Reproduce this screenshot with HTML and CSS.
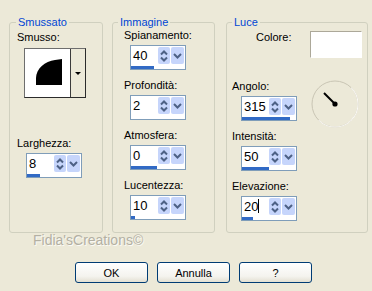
FILE: index.html
```html
<!DOCTYPE html>
<html lang="it">
<head>
<meta charset="utf-8">
<title>Smussatura interna</title>
<link rel="stylesheet" href="styles.css">
</head>
<body>
<div class="dialog">
  <div class="groups">
    <fieldset class="group g1">
      <legend>Smussato</legend>
      <div class="label l-smusso">Smusso:</div>
      <div class="preview">
        <div class="preview-img">
          <svg width="44" height="48" viewBox="0 0 44 48"><path d="M11 36 L11 29 C11 20 20 12 30 11 L37 10 L37 36 Z" fill="#000"/></svg>
        </div>
        <div class="preview-btn"><span class="tri"></span></div>
      </div>
      <div class="label l-larg">Larghezza:</div>
      <div class="spin s1">
        <div class="spin-top"><span class="val">8</span><span class="updown"></span><span class="drop"></span></div>
        <div class="bar"><i style="width:13px"></i></div>
      </div>
    </fieldset>

    <fieldset class="group g2">
      <legend>Immagine</legend>
      <div class="label">Spianamento:</div>
      <div class="spin s2">
        <div class="spin-top"><span class="val">40</span><span class="updown"></span><span class="drop"></span></div>
        <div class="bar"><i style="width:23px"></i></div>
      </div>
      <div class="label">Profondità:</div>
      <div class="spin s2">
        <div class="spin-top"><span class="val">2</span><span class="updown"></span><span class="drop"></span></div>
        <div class="bar"><i style="width:0px"></i></div>
      </div>
      <div class="label">Atmosfera:</div>
      <div class="spin s2">
        <div class="spin-top"><span class="val">0</span><span class="updown"></span><span class="drop"></span></div>
        <div class="bar"><i style="width:26px"></i></div>
      </div>
      <div class="label">Lucentezza:</div>
      <div class="spin s2">
        <div class="spin-top"><span class="val">10</span><span class="updown"></span><span class="drop"></span></div>
        <div class="bar"><i style="width:4px"></i></div>
      </div>
    </fieldset>

    <fieldset class="group g3">
      <legend>Luce</legend>
      <div class="color-row">
        <div class="label l-colore">Colore:</div>
        <div class="swatch"></div>
      </div>
      <div class="angle-row">
        <div class="angle-col">
          <div class="label">Angolo:</div>
          <div class="spin s3">
            <div class="spin-top"><span class="val">315</span><span class="updown"></span><span class="drop"></span></div>
            <div class="bar"><i style="width:48px"></i></div>
          </div>
        </div>
        <svg class="dial" width="48" height="48" viewBox="0 0 48 48">
          <circle cx="24" cy="24" r="23" fill="none" stroke="#c9c5b4" stroke-width="1"/>
          <path d="M24 1 A23 23 0 0 1 24 47" fill="none" stroke="#fbfaf6" stroke-width="1" transform="rotate(45 24 24)"/>
          <line x1="13" y1="13" x2="24" y2="24" stroke="#000" stroke-width="2"/>
          <circle cx="24" cy="24" r="2.6" fill="#000"/>
        </svg>
      </div>
      <div class="label l-int">Intensità:</div>
      <div class="spin s3">
        <div class="spin-top"><span class="val">50</span><span class="updown"></span><span class="drop"></span></div>
        <div class="bar"><i style="width:27px"></i></div>
      </div>
      <div class="label">Elevazione:</div>
      <div class="spin s3">
        <div class="spin-top"><span class="val">20<span class="caret"></span></span><span class="updown"></span><span class="drop"></span></div>
        <div class="bar"><i style="width:11px"></i></div>
      </div>
    </fieldset>
  </div>

  <div class="watermark">Fidia'sCreations©</div>

  <div class="buttons">
    <button class="btn">OK</button>
    <button class="btn">Annulla</button>
    <button class="btn">?</button>
  </div>
</div>
</body>
</html>
```

FILE: styles.css
```css
* { box-sizing: border-box; }
html, body {
  margin: 0;
  padding: 0;
  background: #ece9d8;
}
body {
  width: 372px;
  height: 291px;
  overflow: hidden;
  font-family: "Liberation Sans", Arial, sans-serif;
  font-size: 11px;
  color: #000;
}
.dialog {
  padding: 16px 0 0 9px;
}
.groups {
  display: flex;
  align-items: flex-start;
}
.group {
  margin: 0;
  padding: 0;
  border: 1px solid #d0d0bf;
  border-radius: 3px;
  height: 217px;
  min-width: 0;
}
.g1 { width: 94px; padding-left: 7px; }
.g2 { width: 103px; margin-left: 9px; padding-left: 11px; }
.g3 { width: 142px; margin-left: 11px; padding-left: 5px; padding-right: 5px; }
legend {
  color: #0046d5;
  font-size: 11px;
  line-height: 13px;
  padding: 0 2px;
}
.g1 legend { margin-left: -1px; }
.g2 legend { margin-left: -6px; }
.g3 legend { margin-left: 0; }

.label {
  line-height: 13px;
  height: 13px;
  margin-bottom: 3px;
  white-space: nowrap;
}
.spin + .label { margin-top: 9px; }

/* group 1 */
.l-smusso { margin-top: 2px; margin-bottom: 4px; }
.preview {
  display: flex;
  width: 62px;
  height: 50px;
  margin-left: 7px;
  border: 1px solid #2b2b2b;
  border-top-color: #6e6e6e;
  border-left-color: #6e6e6e;
  background: #fff;
}
.preview-img {
  width: 44px;
  height: 48px;
  background: #fff;
}
.preview-img svg { display: block; }
.preview-btn {
  flex: 1;
  display: flex;
  align-items: center;
  justify-content: center;
  background: #ece9d8;
  border-left: 1px solid #fff;
  box-shadow: inset 1px 0 0 #3c3c3c;
}
.tri {
  width: 0;
  height: 0;
  border-left: 3px solid transparent;
  border-right: 3px solid transparent;
  border-top: 3px solid #000;
  margin-left: 1px;
}
.l-larg { margin-top: 39px; }
.s1 { margin-left: 9px; }
.s2 { margin-left: 6px; }
.s3 { margin-left: 9px; }

/* spin box */
.spin {
  width: 56px;
  height: 25px;
  border: 1px solid #7f9db9;
  background: #fff;
  display: flex;
  flex-direction: column;
}
.spin-top {
  display: flex;
  height: 19px;
}
.val {
  flex: 1;
  font-size: 13px;
  line-height: 19px;
  padding-left: 2px;
  white-space: nowrap;
}
.caret {
  display: inline-block;
  width: 1px;
  height: 14px;
  background: #000;
  vertical-align: -2px;
}
.updown, .drop {
  margin-top: 1px;
  height: 17px;
  border-radius: 2px;
  background-color: #c6d5fb;
  background-repeat: no-repeat;
  background-position: center;
}
.updown {
  width: 12px;
  background-image: url("data:image/svg+xml;utf8,<svg xmlns='http://www.w3.org/2000/svg' width='8' height='14' viewBox='0 0 8 14'><path d='M1 5.5 L4 2.5 L7 5.5' fill='none' stroke='%234d6185' stroke-width='2'/><path d='M1 8.5 L4 11.5 L7 8.5' fill='none' stroke='%234d6185' stroke-width='2'/></svg>");
}
.drop {
  width: 13px;
  margin-left: 1px;
  margin-right: 1px;
  background-image: url("data:image/svg+xml;utf8,<svg xmlns='http://www.w3.org/2000/svg' width='9' height='6' viewBox='0 0 9 6'><path d='M1 1 L4.5 4.5 L8 1' fill='none' stroke='%234d6185' stroke-width='2'/></svg>");
}
.bar {
  height: 3px;
  margin-top: 1px;
  background: #fff;
}
.bar i {
  display: block;
  height: 3px;
  background: #316ac5;
}

/* group 3 */
.color-row {
  display: flex;
  align-items: flex-start;
  height: 30px;
}
.l-colore { margin-top: 2px; margin-left: 24px; }
.swatch {
  margin-left: auto;
  margin-top: 2px;
  width: 52px;
  height: 27px;
  background: #fff;
  border: 1px solid #fff;
  border-top-color: #aca899;
  border-left-color: #aca899;
}
.angle-row {
  display: flex;
  align-items: flex-start;
  margin-top: 21px;
}
.dial {
  display: block;
  margin-left: 14px;
  margin-top: 0;
  margin-bottom: -6px;
}
.l-int { margin-top: 8px; }

.watermark {
  padding-left: 24px;
  font-size: 14px;
  line-height: 14px;
  height: 14px;
  color: #b3b0a3;
  text-shadow: 1px 1px 0 #fbfaf5;
}

.buttons {
  display: flex;
  gap: 9px;
  margin-top: 15px;
  padding-left: 66px;
}
.btn {
  width: 73px;
  height: 21px;
  padding: 0;
  margin: 0;
  font-family: "Liberation Sans", Arial, sans-serif;
  font-size: 11px;
  color: #000;
  border: 1px solid #003c74;
  border-radius: 3px;
  background: linear-gradient(#ffffff, #f4f3ee 70%, #e3e0d2);
}
```
